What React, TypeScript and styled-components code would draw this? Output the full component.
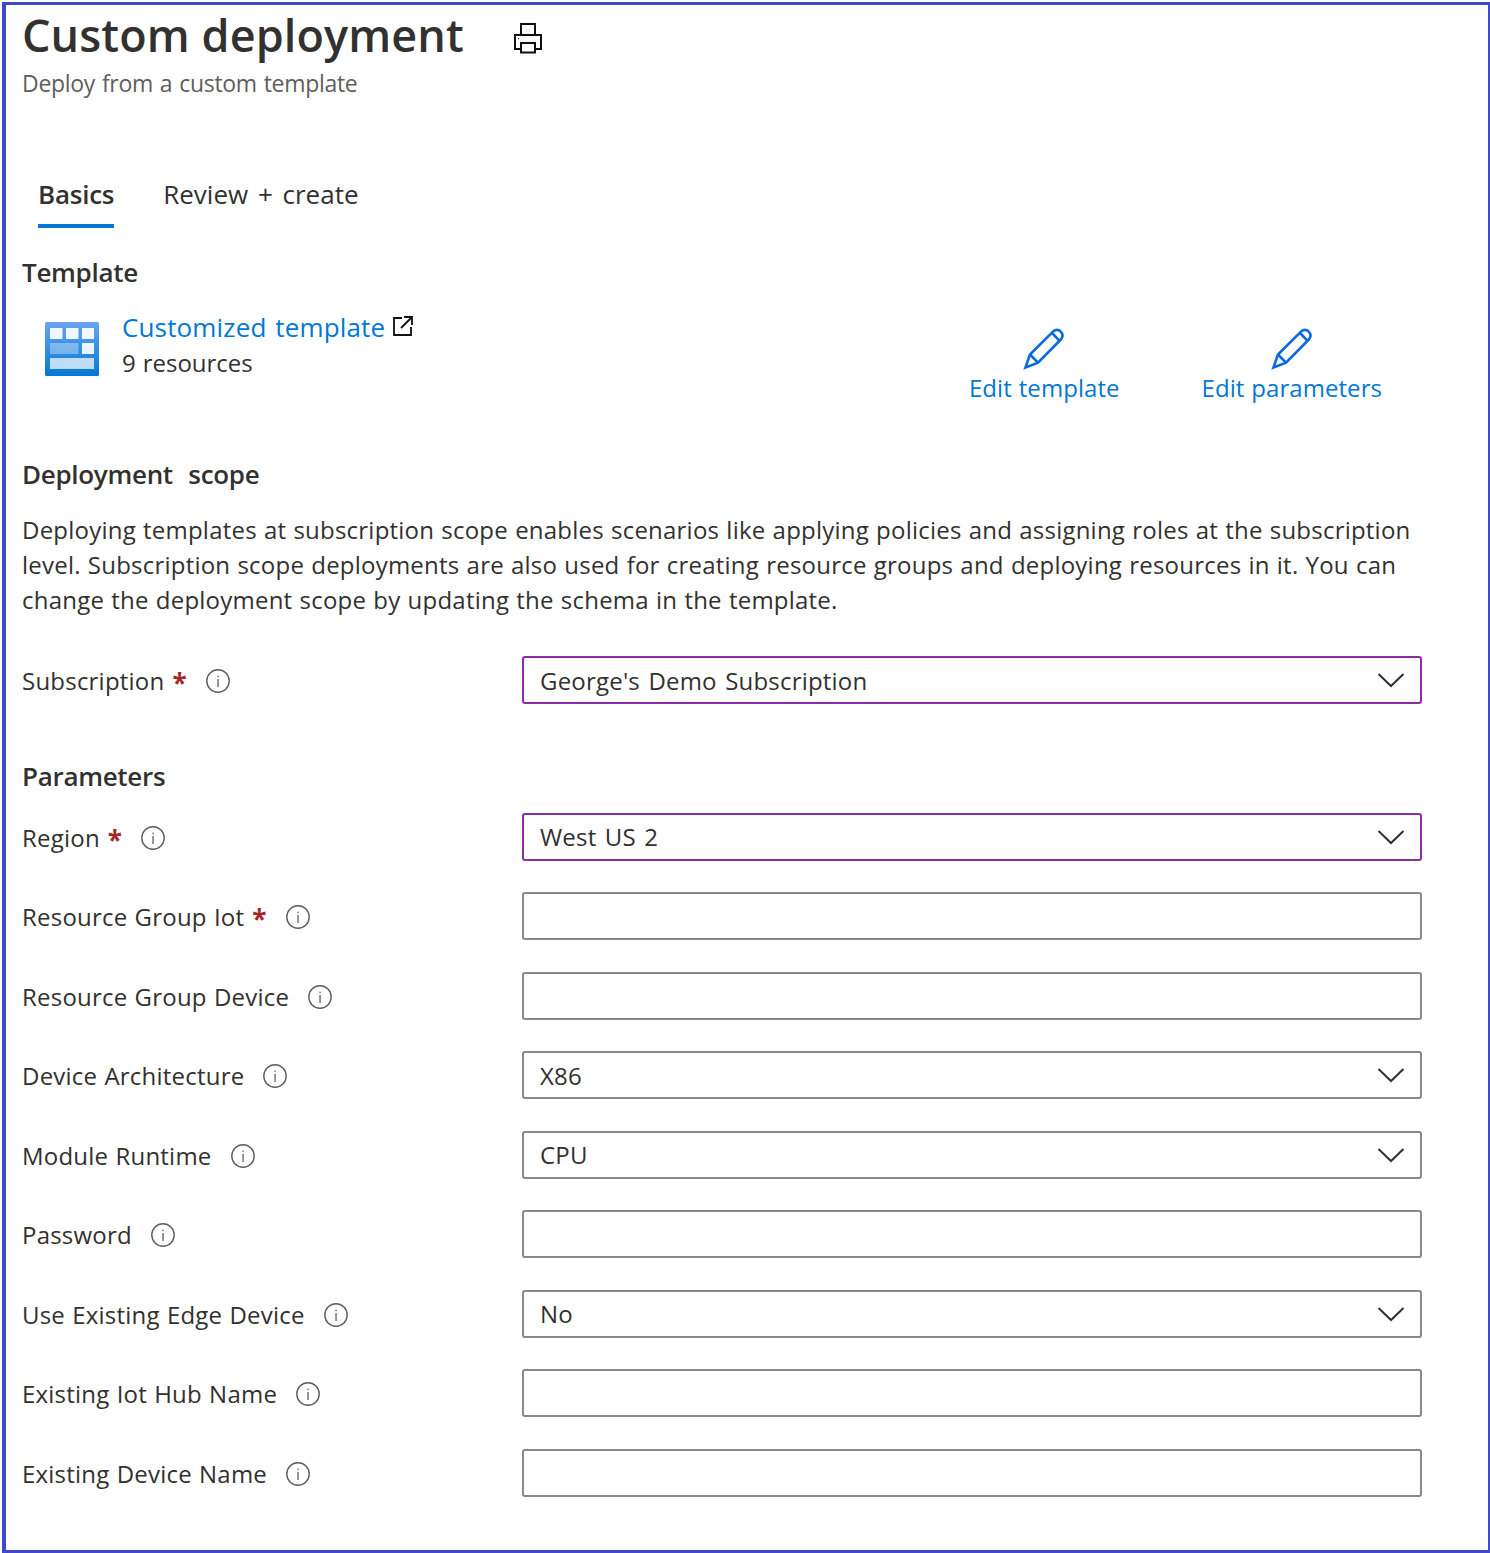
import React from "react";
import styled, { createGlobalStyle, css } from "styled-components";

const Global = createGlobalStyle`
  html, body { margin: 0; padding: 0; background: #fff; }
  body { font-family: "Open Sans", "Noto Sans", "Liberation Sans", sans-serif; color: #323130; }
  * { box-sizing: border-box; }
`;

const bodyText = css`
  font-size: 24px;
  line-height: 36px;
  letter-spacing: 0.22px;
  word-spacing: 0.7px;
`;

const Frame = styled.main`
  margin: 2px 0 0 2px;
  width: 1488px;
  height: 1551px;
  border-style: solid;
  border-color: #4048d0;
  border-width: 3px 2px 3px 4px;
  padding: 0 0 0 16px;
  overflow: hidden;
  background: #fff;
`;
const TitleRow = styled.header`
  display: flex;
  align-items: center;
  height: 60px;
  gap: 49px;
`;
const Title = styled.h1`
  margin: 0;
  font-size: 45px;
  line-height: 60px;
  font-weight: 600;
  letter-spacing: 0.1px;
  color: #323130;
  white-space: nowrap;
`;
const PrintIcon = styled.svg`
  width: 30px;
  height: 33px;
  margin-top: 4px;
  flex: none;
`;
const Subtitle = styled.p`
  margin: 3px 0 0;
  font-size: 23px;
  line-height: 30px;
  letter-spacing: -0.3px;
  word-spacing: 1.2px;
  color: #605e5c;
`;
const Tabs = styled.nav`
  display: flex;
  margin: 80px 0 0 16px;
  gap: 49px;
`;
const Tab = styled.div<{ $active?: boolean }>`
  font-size: 26px;
  line-height: 32px;
  letter-spacing: ${(p) => (p.$active ? "-0.25px" : "0")};
  word-spacing: 3px;
  font-weight: ${(p) => (p.$active ? 600 : 400)};
  padding: 0 0 14px;
  border-bottom: 4px solid ${(p) => (p.$active ? "#0078d4" : "transparent")};
`;
const Heading = styled.h2<{ $top: number }>`
  margin: ${(p) => p.$top}px 0 0;
  font-size: 26px;
  line-height: 30px;
  font-weight: 600;
  letter-spacing: -0.3px;
  word-spacing: 9px;
  color: #323130;
`;
const TemplateRow = styled.section`
  display: flex;
  margin-top: 22px;
  height: 92px;
  padding-right: 106px;
`;
const TemplateIcon = styled.svg`
  width: 54px;
  height: 54px;
  margin: 13px 23px 0 23px;
  flex: none;
`;
const TemplateInfo = styled.div`
  flex: 1;
  ${bodyText}
  letter-spacing: 0;
`;
const TemplateLink = styled.div`
  display: flex;
  align-items: flex-start;
  font-size: 26px;
  letter-spacing: 0.15px;
  word-spacing: 2px;
  color: #0078d4;
  gap: 8px;
`;
const ExternalIcon = styled.svg`
  width: 20px;
  height: 20px;
  margin-top: 7px;
  flex: none;
`;
const Actions = styled.div`
  display: flex;
  gap: 82px;
  padding-top: 19px;
`;
const Action = styled.div`
  display: flex;
  flex-direction: column;
  align-items: center;
  color: #0078d4;
  ${bodyText}
  letter-spacing: 0.05px;
`;
const Pencil = styled.svg`
  width: 42px;
  height: 42px;
  flex: none;
`;
const Paragraph = styled.p`
  margin: 22.5px 0 0;
  ${bodyText}
  line-height: 35px;
  width: 1410px;
  white-space: nowrap;
`;
const Row = styled.div<{ $top?: number }>`
  display: grid;
  grid-template-columns: 500px 900px;
  align-items: center;
  height: 48px;
  margin-top: ${(p) => p.$top ?? 0}px;
`;
const Rows = styled.div`
  display: flex;
  flex-direction: column;
  gap: 31.5px;
  margin-top: 21.9px;
`;
const Label = styled.label`
  display: flex;
  align-items: center;
  padding-top: 2px;
  ${bodyText}
`;
const Star = styled.span`
  color: #a4262c;
  font-size: 26px;
  font-weight: 700;
  margin-left: 8px;
  position: relative;
  top: 2px;
`;
const InfoIcon = styled.svg`
  width: 26px;
  height: 26px;
  margin-left: 18px;
  flex: none;
`;
const Select = styled.div<{ $focus?: boolean }>`
  display: flex;
  align-items: center;
  justify-content: space-between;
  height: 48px;
  padding: 0 15px 0 16px;
  border: 2px solid ${(p) => (p.$focus ? "#8a2da5" : "#8a8886")};
  border-radius: 3px;
  font-size: 24px;
  letter-spacing: 0.2px;
  word-spacing: 2px;
  color: #323130;
`;
const TextBox = styled.input`
  display: block;
  width: 100%;
  height: 48px;
  padding: 0 16px;
  border: 2px solid #8a8886;
  border-radius: 3px;
  background: #fff;
  outline: none;
`;
const Chevron = styled.svg`
  width: 28px;
  height: 16px;
  flex: none;
`;

const Info = () => (
  <InfoIcon viewBox="0 0 26 26" fill="none">
    <circle cx="13" cy="13" r="11.2" stroke="#605e5c" strokeWidth="1.4" />
    <rect x="12.4" y="11" width="1.3" height="8" fill="#605e5c" />
    <rect x="12.4" y="7.6" width="1.3" height="1.6" fill="#605e5c" />
  </InfoIcon>
);

const PencilIcon = () => (
  <Pencil viewBox="0 0 42 42" fill="none" stroke="#0b6ae0" strokeWidth="2.6" strokeLinejoin="miter">
    <path d="M2.5 39.5 L7 26.5 L30 3.6 C32.5 1.4 35.5 1.4 37.8 3.6 C40 6 40 9 37.8 11.5 L15 34.6 Z" />
    <path d="M29 5 L36.6 12.8" />
    <path d="M7 26.5 L15 34.6" />
  </Pencil>
);

type Field = { label: string; required?: boolean; value?: string; focus?: boolean };
const fields: Field[] = [
  { label: "Region", required: true, value: "West US 2", focus: true },
  { label: "Resource Group Iot", required: true },
  { label: "Resource Group Device" },
  { label: "Device Architecture", value: "X86" },
  { label: "Module Runtime", value: "CPU" },
  { label: "Password" },
  { label: "Use Existing Edge Device", value: "No" },
  { label: "Existing Iot Hub Name" },
  { label: "Existing Device Name" },
];

const FieldRow = ({ field, top }: { field: Field; top?: number }) => (
  <Row $top={top}>
    <Label>
      {field.label}
      {field.required && <Star>*</Star>}
      <Info />
    </Label>
    {field.value ? (
      <Select $focus={field.focus}>
        {field.value}
        <Chevron viewBox="0 0 28 16" fill="none">
          <path d="M1.5 2 L14 14 L26.5 2" stroke="#323130" strokeWidth="2" />
        </Chevron>
      </Select>
    ) : (
      <TextBox aria-label={field.label} />
    )}
  </Row>
);

export default function App() {
  return (
    <>
      <Global />
      <Frame>
        <TitleRow>
          <Title>Custom deployment</Title>
          <PrintIcon viewBox="0 0 30 33" fill="none" stroke="#111" strokeWidth="2">
            <path d="M8 14 V3 H22 V14" />
            <rect x="2" y="14" width="26" height="14" />
            <rect x="8" y="22" width="14" height="9.5" fill="#fff" />
            <rect x="5" y="17" width="1" height="1" fill="#111" stroke="none" />
          </PrintIcon>
        </TitleRow>
        <Subtitle>Deploy from a custom template</Subtitle>
        <Tabs>
          <Tab $active>Basics</Tab>
          <Tab>Review + create</Tab>
        </Tabs>
        <Heading $top={29}>Template</Heading>
        <TemplateRow>
          <TemplateIcon viewBox="0 0 54 54">
            <defs>
              <linearGradient id="tpl" x1="0" y1="0" x2="0" y2="1">
                <stop offset="0" stopColor="#6aa5f0" />
                <stop offset="1" stopColor="#0078d4" />
              </linearGradient>
            </defs>
            <rect width="54" height="54" rx="1.5" fill="url(#tpl)" />
            <g fill="#fff">
              <rect x="5" y="6" width="12.5" height="11" opacity="0.92" />
              <rect x="21" y="6" width="12.5" height="11" opacity="0.92" />
              <rect x="37" y="6" width="12" height="11" opacity="0.92" />
              <rect x="5" y="21" width="28.5" height="11" opacity="0.35" />
              <rect x="37" y="21" width="12" height="11" opacity="0.9" />
              <rect x="5" y="36" width="44" height="11" opacity="0.72" />
            </g>
          </TemplateIcon>
          <TemplateInfo>
            <TemplateLink>
              Customized template
              <ExternalIcon viewBox="0 0 20 20" fill="none" stroke="#111" strokeWidth="1.8">
                <path d="M9 2 H1 V19 H18 V11" />
                <path d="M8 12 L18.5 1.5 M11 1 H19 V9" />
              </ExternalIcon>
            </TemplateLink>
            <div>9 resources</div>
          </TemplateInfo>
          <Actions>
            <Action>
              <PencilIcon />
              Edit template
            </Action>
            <Action>
              <PencilIcon />
              Edit parameters
            </Action>
          </Actions>
        </TemplateRow>
        <Heading $top={58}>Deployment scope</Heading>
        <Paragraph>
          Deploying templates at subscription scope enables scenarios like applying policies and assigning roles at the subscription
          <br />
          level. Subscription scope deployments are also used for creating resource groups and deploying resources in it. You can
          <br />
          change the deployment scope by updating the schema in the template.
        </Paragraph>
        <FieldRow top={39.5} field={{ label: "Subscription", required: true, value: "George's Demo Subscription", focus: true }} />
        <Heading $top={57}>Parameters</Heading>
        <Rows>
          {fields.map((f) => (
            <FieldRow key={f.label} field={f} />
          ))}
        </Rows>
      </Frame>
    </>
  );
}
